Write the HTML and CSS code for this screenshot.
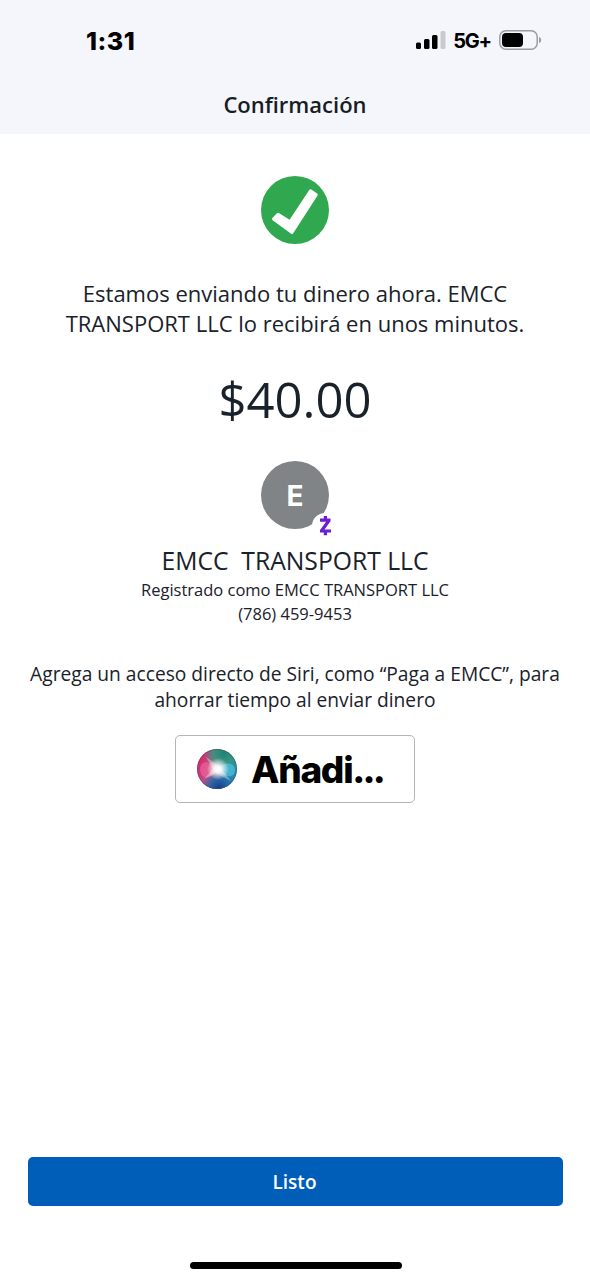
FILE: index.html
```html
<!DOCTYPE html>
<html lang="es">
<head>
    <meta charset="UTF-8">
    <meta name="viewport" content="width=device-width, initial-scale=1">
    <title>Confirmación</title>
    <link rel="stylesheet" href="styles.css">
</head>
<body>
    <header class="header">
        <div class="status-bar">
            <span class="time">1:31</span>
            <div class="status-icons">
                <svg class="signal" width="31" height="20" viewBox="0 0 31 20">
                    <rect x="1" y="12.5" width="5" height="6.5" rx="1.5"/>
                    <rect x="9" y="9" width="5.5" height="10" rx="1.5"/>
                    <rect x="17" y="5" width="5.5" height="14" rx="1.5"/>
                    <rect x="25.5" y="1" width="5" height="18" rx="1.5" fill="#c9cacd"/>
                </svg>
                <span class="network">5G+</span>
                <svg class="battery" width="43" height="20" viewBox="0 0 43 20">
                    <rect x="0.8" y="0.8" width="37.4" height="18.4" rx="6" fill="none" stroke="#9b9c9f" stroke-width="1.5"/>
                    <rect x="3" y="3" width="21" height="14" rx="4"/>
                    <path d="M40 7c1.6.5 2.200 1.500 2.200 3s-.6 2.500-2.200 3z" fill="#9b9c9f"/>
                </svg>
            </div>
        </div>
        <h1>Confirmación</h1>
    </header>

    <main>
        <svg class="check" width="68" height="68" viewBox="0 0 68 68">
            <circle cx="34" cy="34" r="34" fill="#2fa84f"/>
            <path d="M12.5 43L17 38.2L29 45.8L49.5 14.8L55.3 18.8L31 56.5z" fill="#fff" stroke="#fff" stroke-width="3" stroke-linejoin="round"/>
        </svg>

        <p class="message">Estamos enviando tu dinero ahora. EMCC<br>TRANSPORT LLC lo recibirá en unos minutos.</p>
        <p class="amount">$40.00</p>

        <div class="avatar">
            <span>E</span>
            <svg class="zelle" width="26" height="26" viewBox="0 0 26 26">
                <circle cx="13" cy="13" r="13" fill="#fff"/>
                <path d="M8 7.200h10.500M17 7.500L9.800 17.500M8 18h11M13.400 3v4M13.400 18v4.200" fill="none" stroke="#6d1ed4" stroke-width="3.2"/>
            </svg>
        </div>

        <h2>EMCC&nbsp; TRANSPORT LLC</h2>
        <p class="detail">Registrado como EMCC TRANSPORT LLC</p>
        <p class="detail">(786) 459-9453</p>

        <p class="siri-text">Agrega un acceso directo de Siri, como “Paga a EMCC”, para<br>ahorrar tiempo al enviar dinero</p>

        <button class="siri-button">
            <svg width="42" height="42" viewBox="0 0 42 42">
                <defs>
                    <linearGradient id="base" x1="0.1" y1="0.3" x2="1" y2="0.6">
                        <stop offset="0" stop-color="#d52d70"/>
                        <stop offset="0.4" stop-color="#b4608e"/>
                        <stop offset="0.75" stop-color="#3294a8"/>
                        <stop offset="1" stop-color="#2686a9"/>
                    </linearGradient>
                    <radialGradient id="green" cx="0.66" cy="0.1" r="0.48">
                        <stop offset="0" stop-color="#1e8373"/>
                        <stop offset="0.5" stop-color="#32967f" stop-opacity="0.9"/>
                        <stop offset="1" stop-color="#32967f" stop-opacity="0"/>
                    </radialGradient>
                    <radialGradient id="blue" cx="0.55" cy="0.98" r="0.45">
                        <stop offset="0" stop-color="#153b83"/>
                        <stop offset="0.5" stop-color="#2162a5" stop-opacity="0.9"/>
                        <stop offset="1" stop-color="#2162a5" stop-opacity="0"/>
                    </radialGradient>
                    <radialGradient id="glow">
                        <stop offset="0" stop-color="#fff"/>
                        <stop offset="0.3" stop-color="#fff" stop-opacity="0.9"/>
                        <stop offset="1" stop-color="#fff" stop-opacity="0"/>
                    </radialGradient>
                </defs>
                <circle cx="21" cy="21" r="20" fill="url(#base)"/>
                <circle cx="21" cy="21" r="20" fill="url(#green)"/>
                <circle cx="21" cy="21" r="20" fill="url(#blue)"/>
                <path d="M21 21c7-8 18-7 18 1s-10 9-18-1z" fill="#54cbea" opacity="0.6"/>
                <path d="M4 21c1-10 11-8 17 1c-5 10-17 10-17-1z" fill="#ff77a9" opacity="0.45"/>
                <path d="M10 9L23 18L35 33L20 25L8 31L17 21z" fill="#fff" opacity="0.35"/>
                <circle cx="22" cy="21" r="11" fill="url(#glow)"/>
                <circle cx="21" cy="21" r="19.5" fill="none" stroke="#3d4d70" opacity="0.5"/>
            </svg>
            <span>Añadi<span class="dots">...</span></span>
        </button>
    </main>

    <footer>
        <button class="done">Listo</button>
        <div class="home-indicator"></div>
    </footer>
</body>
</html>
```

FILE: styles.css
```css
* {
    box-sizing: border-box;
}

body {
    display: flex;
    flex-direction: column;
    height: 1280px;
    margin: 0;
    background: #fff;
    color: #19212a;
    font-family: 'Open Sans', 'Noto Sans', sans-serif;
    text-align: center;
}

h1, h2, p {
    margin: 0;
    font-weight: 400;
}

button {
    font-family: inherit;
}

svg {
    display: block;
}

/* Header */
.header {
    height: 134px;
    background: #f5f6fb;
}

.status-bar {
    display: flex;
    justify-content: space-between;
    align-items: center;
    height: 80px;
    padding: 0 48px 0 86px;
    color: #000;
    font-family: Inter, sans-serif;
}

.time {
    padding-top: 1px;
    font-size: 25px;
    font-weight: 800;
    letter-spacing: 0.5px;
}

.status-icons {
    display: flex;
    align-items: center;
}

.network {
    margin: 2px 8px 0 7px;
    font-size: 20px;
    font-weight: 700;
    letter-spacing: -1.2px;
}

.header h1 {
    color: #171d25;
    font-size: 22px;
    font-weight: 600;
    line-height: 48px;
}

/* Content */
main {
    display: flex;
    flex: 1;
    flex-direction: column;
    align-items: center;
    padding-top: 42px;
}

.message {
    margin-top: 34px;
    font-size: 22px;
    line-height: 30px;
}

.amount {
    margin-top: 31px;
    font-size: 49px;
    line-height: 60px;
}

.avatar {
    position: relative;
    width: 68px;
    height: 68px;
    margin-top: 32px;
    border-radius: 50%;
    background: #808487;
    color: #fff;
    font-family: Inter, sans-serif;
    font-size: 28px;
    font-weight: 700;
    line-height: 71px;
}

.zelle {
    position: absolute;
    top: 52px;
    left: 51px;
}

h2 {
    margin-top: 17px;
    font-size: 24.7px;
    line-height: 30px;
}

.detail {
    font-size: 16.5px;
    line-height: 24px;
}

h2 + .detail {
    margin-top: 2px;
}

.siri-text {
    margin-top: 35px;
    font-size: 19.2px;
    line-height: 26px;
}

.siri-button {
    display: flex;
    align-items: center;
    gap: 13px;
    width: 240px;
    height: 68px;
    margin-top: 22px;
    padding: 0 0 0 20px;
    border: 1.5px solid #b5b5b5;
    border-radius: 5px;
    background: #fff;
    color: #000;
    font-family: Inter, sans-serif;
    font-size: 37px;
    font-weight: 800;
    letter-spacing: -1.3px;
}

.dots {
    letter-spacing: -2.8px;
}

/* Footer */
footer {
    display: flex;
    flex-direction: column;
    align-items: center;
    gap: 56px;
    padding: 0 27px 11px 28px;
}

.done {
    width: 100%;
    height: 49px;
    padding: 0 2px 0 0;
    border: 0;
    border-radius: 5px;
    background: #005eb8;
    color: #fff;
    font-size: 19px;
    font-weight: 600;
}

.home-indicator {
    width: 212px;
    height: 7px;
    border-radius: 4px;
    background: #000;
}
```
